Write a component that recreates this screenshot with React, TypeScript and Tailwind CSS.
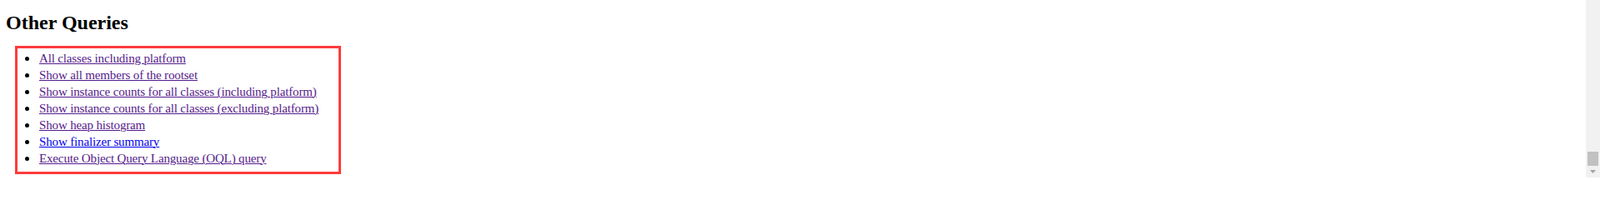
import React from "react";

const items: { label: string; visited: boolean }[] = [
  { label: "All classes including platform", visited: true },
  { label: "Show all members of the rootset", visited: true },
  { label: "Show instance counts for all classes (including platform)", visited: true },
  { label: "Show instance counts for all classes (excluding platform)", visited: true },
  { label: "Show heap histogram", visited: true },
  { label: "Show finalizer summary", visited: false },
  { label: "Execute Object Query Language (OQL) query", visited: true },
];

export default function App() {
  return (
    <div className="flex h-[213px] w-full overflow-hidden bg-white" style={{ fontFamily: '"Liberation Serif", "Times New Roman", serif' }}>
      <div className="flex-1 min-w-0">
        <h2 className="mt-[13px] pl-[7px] text-[24px] font-bold leading-[28px] text-black">Other Queries</h2>
        <div className="ml-[18px] mt-[14px] h-[154px] w-[391px] border-[3px] border-[#ff3b3b] pt-[2px]">
          <ul className="flex flex-col">
            {items.map((it) => (
              <li key={it.label} className="flex h-[20px] items-center">
                <span className="ml-[9px] mr-[12px] h-[5px] w-[5px] shrink-0 rounded-full bg-black" />
                <a
                  href="#"
                  className={
                    "whitespace-nowrap text-[15px] leading-[20px] tracking-[-0.15px] underline decoration-1 " +
                    (it.visited ? "text-[#551a8b]" : "text-[#0000ee]")
                  }
                >
                  {it.label}
                </a>
              </li>
            ))}
          </ul>
        </div>
      </div>
      <div className="flex h-[213px] w-[17px] shrink-0 flex-col bg-[#f1f1f1]">
        <div className="flex-1" />
        <div className="mx-[2px] h-[17px] bg-[#c1c1c1]" />
        <div className="flex h-[14px] justify-center pt-[5px]">
          <svg width="7" height="4" viewBox="0 0 7 4">
            <polygon points="0,0 7,0 3.5,4" fill="#a3a3a3" />
          </svg>
        </div>
      </div>
    </div>
  );
}
